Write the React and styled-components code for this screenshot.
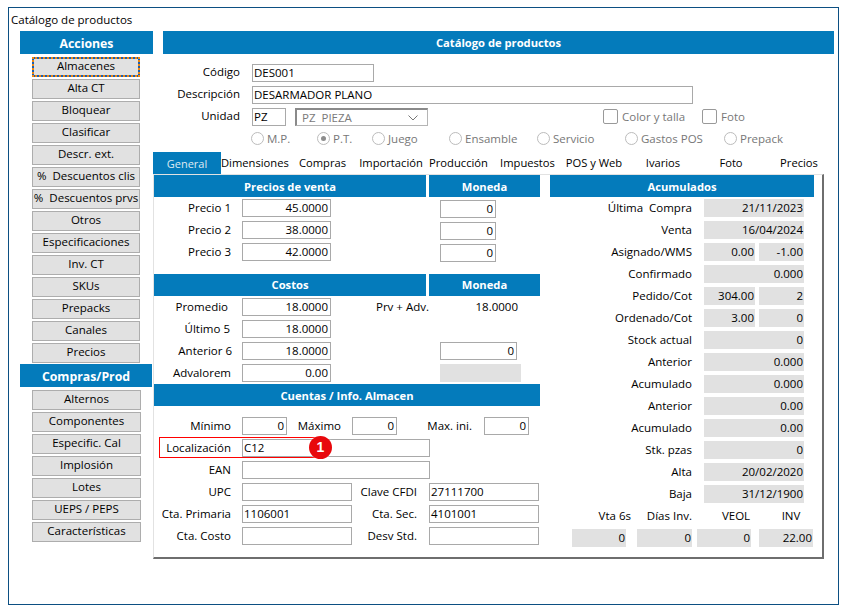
import React from "react";
import styled, { createGlobalStyle } from "styled-components";

const Global = createGlobalStyle`
  html, body { margin: 0; padding: 0; background: #fff; }
  body { font-family: "Open Sans", "Noto Sans", "Liberation Sans", sans-serif; font-size: 11.5px; color: #000; }
`;
const BLUE = "#047bbb";

const Frame = styled.div`
  box-sizing: border-box;
  width: 831px; height: 598px;
  margin: 7px 0 0 8px;
  border: 1px solid #0c4f82;
  padding: 4px 0 0 2px;
`;
const Title = styled.div`height: 19px; line-height: 16px;`;
const Columns = styled.div`display: flex; align-items: flex-start;`;
const Sidebar = styled.div`
  width: 133px; margin-left: 9px; margin-right: 10px; flex: none;
  display: flex; flex-direction: column; align-items: flex-start;
`;
const SideHead = styled.div`
  width: ${p => p.$w}px; height: 23px; line-height: 25px; text-align: center;
  background: ${BLUE}; color: #fff; font-weight: 700; font-size: 12.3px;
`;
const SideGroup = styled.div`
  display: flex; flex-direction: column; gap: 2px; padding: 3px 0 ${p => p.$end}px 12px;
`;
const SideBtn = styled.div`
  box-sizing: border-box; width: ${p => p.$w}px; height: 20px; line-height: 16px;
  text-align: center; background: #e1e1e1; border: 1px solid #adadad;
  white-space: pre; font-size: 11.5px;
  ${p => p.$focus && `
    border: 2px dotted #f0860f;
    background: linear-gradient(#e1e1e1, #e1e1e1) padding-box, #1a5fb0 border-box;
    line-height: 13px;
  `}
`;
const Main = styled.div`width: 671px; flex: none;`;
const MainHead = styled.div`
  height: 23px; line-height: 23px; text-align: center; background: ${BLUE};
  color: #fff; font-weight: 700; font-size: 11.2px;
`;
const Form = styled.div`
  display: grid; grid-template-rows: repeat(3, 22px); padding-top: 8px;
`;
const FormRow = styled.div`display: flex; align-items: center; height: 22px;`;
const FormLabel = styled.div`width: 77px; margin-right: 12px; text-align: right; transform: translateY(-2px);`;
const Input = styled.div`
  box-sizing: border-box; flex: none; width: ${p => p.$w}px; height: 18px; line-height: 16px;
  border: 1px solid #a9a9a9; padding: 0 2px 0 1px; background: #fff; white-space: pre;
  text-align: ${p => p.$right ? "right" : "left"};
  margin-left: ${p => p.$ml || 0}px;
  margin-top: ${p => p.$mt || 0}px;
`;
const Select = styled.div`
  box-sizing: border-box; display: flex; align-items: center; justify-content: space-between;
  width: 133px; height: 18px; margin-left: 9px; padding: 0 9px 0 5px;
  border: 1px solid #b5b5b5; border-top: 2px solid #8a8a8a; border-left: 2px solid #8a8a8a;
  color: #7a7a7a; white-space: pre;
`;
const Check = styled.div`
  display: flex; align-items: center; gap: 4px; color: #777; margin-left: ${p => p.$ml}px;
  transform: translateY(-1px);
`;
const Box = styled.span`
  display: inline-block; box-sizing: border-box; width: 15px; height: 15px; border: 1px solid #999; border-radius: 2px;
`;
const RadioRow = styled.div`display: flex; align-items: center; height: 24px; margin-left: 88px; transform: translateY(-2px);`;
const RadioItem = styled.div`
  display: flex; align-items: center; gap: 3px; width: ${p => p.$w}px; flex: none; color: #777;
`;
const RadioDot = styled.span`
  box-sizing: border-box; width: 13px; height: 13px; border-radius: 50%;
  border: 1px solid #bcbcbc; display: flex; align-items: center; justify-content: center; flex: none;
  &::after { content: ""; width: 5px; height: 5px; border-radius: 50%; background: ${p => p.$on ? "#8d8d8d" : "transparent"}; }
`;
const Tabs = styled.div`display: flex; margin-left: -10px; height: 22px; font-size: 11.2px;`;
const Tab = styled.div`
  width: ${p => p.$w}px; flex: none; text-align: center; line-height: 22px; white-space: pre;
  ${p => p.$on ? `background: ${BLUE}; color: #dfeaf2; line-height: 24px; font-size: 11px;` : ""}
`;
const Panel = styled.div`
  box-sizing: border-box; width: 671px; height: 385px; margin-left: -10px;
  border: 1px solid #e2e2e2; border-right: 2px solid #6e6e6e; border-bottom: 2px solid #6e6e6e;
  display: flex; gap: 10px;
`;
const LeftPane = styled.div`width: 386px; flex: none;`;
const RightPane = styled.div`width: 264px; flex: none;`;
const HeadRow = styled.div`display: flex; gap: 3px;`;
const SecHead = styled.div`
  height: 22px; line-height: ${p => p.$lh || 23}px; text-align: center; background: ${BLUE}; color: #fff;
  font-weight: 700; font-size: 11.2px; width: ${p => p.$w ? p.$w + "px" : "100%"};
`;
const Rows = styled.div`
  display: flex; flex-direction: column; padding-top: ${p => p.$top || 0}px; height: ${p => p.$h}px; box-sizing: border-box;
`;
const Row = styled.div`position: relative; display: flex; align-items: center; height: 22px; flex: none;`;
const Lab = styled.div`
  box-sizing: border-box; width: ${p => p.$w}px; flex: none; text-align: right; transform: translateY(-1px); white-space: pre;
  margin-left: ${p => p.$ml || 0}px; padding-right: ${p => p.$pr || 0}px;
`;
const Plain = styled.div`
  width: ${p => p.$w}px; flex: none; text-align: ${p => p.$center ? "center" : "right"}; margin-left: ${p => p.$ml || 0}px; transform: translateY(-1px); white-space: pre;
`;
const Read = styled.div`
  box-sizing: border-box; flex: none; width: ${p => p.$w}px; height: 18px; line-height: 18px; background: #e1e1e1;
  text-align: right; padding-right: 1px; margin-left: ${p => p.$ml || 0}px;
`;
const RedBox = styled.div`
  position: absolute; left: 5px; top: 0; width: 158px; height: 21px; box-sizing: border-box;
  border: 1px solid #ff0000; pointer-events: none;
`;
const Badge = styled.div`
  position: absolute; left: 155px; top: -1px; width: 23px; height: 23px; border-radius: 50%;
  background: #e8080c; color: #fff; font-weight: 700; font-size: 14px; line-height: 23px; text-align: center;
  box-shadow: 0 0 2px rgba(255,255,255,.9);
  font-family: "Liberation Sans", sans-serif;
`;

const actions = ["Almacenes","Alta CT","Bloquear","Clasificar","Descr. ext.","%  Descuentos clis","%  Descuentos prvs","Otros","Especificaciones","Inv. CT","SKUs","Prepacks","Canales","Precios"];
const compras = ["Alternos","Componentes","Especific. Cal","Implosión","Lotes","UEPS / PEPS","Características"];
const radios = [["M.P.",66],["P.T.",55],["Juego",77],["Ensamble",88],["Servicio",88],["Gastos POS",99],["Prepack",80]];
const tabs = [["General",68],["Dimensiones",66],["Compras",71],["Importación",66],["Producción",69],["Impuestos",69],["POS y Web",64],["Ivarios",74],["Foto",62],["Precios",74]];
const precios = [["Precio 1","45.0000"],["Precio 2","38.0000"],["Precio 3","42.0000"]];
const acum = [
  ["Última  Compra",[["21/11/2023",100]]],
  ["Venta",[["16/04/2024",100]]],
  ["Asignado/WMS",[["0.00",51],["-1.00",45]]],
  ["Confirmado",[["0.000",100]]],
  ["Pedido/Cot",[["304.00",51],["2",45]]],
  ["Ordenado/Cot",[["3.00",51],["0",45]]],
  ["Stock actual",[["0",100]]],
  ["Anterior",[["0.000",100]]],
  ["Acumulado",[["0.000",100]]],
  ["Anterior",[["0.00",100]]],
  ["Acumulado",[["0.00",100]]],
  ["Stk. pzas",[["0",100]]],
  ["Alta",[["20/02/2020",100]]],
  ["Baja",[["31/12/1900",100]]],
];

export default function App() {
  return (
    <>
      <Global />
      <Frame>
        <Title>Catálogo de productos</Title>
        <Columns>
          <Sidebar>
            <SideHead $w={133}>Acciones</SideHead>
            <SideGroup $end={1}>
              {actions.map((a, i) => <SideBtn key={a} $w={108} $focus={i === 0}>{a}</SideBtn>)}
            </SideGroup>
            <SideHead $w={132}>Compras/Prod</SideHead>
            <SideGroup $end={0}>
              {compras.map(a => <SideBtn key={a} $w={109}>{a}</SideBtn>)}
            </SideGroup>
          </Sidebar>
          <Main>
            <MainHead>Catálogo de productos</MainHead>
            <Form>
              <FormRow><FormLabel>Código</FormLabel><Input $w={122}>DES001</Input></FormRow>
              <FormRow><FormLabel>Descripción</FormLabel><Input $w={441}>DESARMADOR PLANO</Input></FormRow>
              <FormRow>
                <FormLabel>Unidad</FormLabel>
                <Input $w={34}>PZ</Input>
                <Select>
                  <span>PZ  PIEZA</span>
                  <svg width="10" height="6" viewBox="0 0 10 6" fill="none" stroke="#777" strokeWidth="1"><path d="M.5.5 5 5 9.5.5" /></svg>
                </Select>
                <Check $ml={175}><Box />Color y talla</Check>
                <Check $ml={17}><Box />Foto</Check>
              </FormRow>
            </Form>
            <RadioRow>
              {radios.map(([r, w]) => <RadioItem key={r} $w={w}><RadioDot $on={r === "P.T."} />{r}</RadioItem>)}
            </RadioRow>
            <Tabs>
              {tabs.map(([t, w], i) => <Tab key={t} $w={w} $on={i === 0}>{t}</Tab>)}
            </Tabs>
            <Panel>
              <LeftPane>
                <HeadRow><SecHead $w={272}>Precios de venta</SecHead><SecHead $w={111}>Moneda</SecHead></HeadRow>
                <Rows $h={77}>
                  {precios.map(([l, v]) => (
                    <Row key={l}>
                      <Lab $w={77}>{l}</Lab>
                      <Input $w={89} $ml={11} $right>{v}</Input>
                      <Input $w={56} $ml={109} $mt={2} $right>0</Input>
                    </Row>
                  ))}
                </Rows>
                <HeadRow><SecHead $w={272} $lh={22}>Costos</SecHead><SecHead $w={111} $lh={22}>Moneda</SecHead></HeadRow>
                <Rows $h={88}>
                  <Row>
                    <Lab $w={77} $pr={3}>Promedio</Lab><Input $w={89} $ml={11} $right>18.0000</Input>
                    <Lab $w={98}>Prv + Adv.</Lab><Plain $w={89}>18.0000</Plain>
                  </Row>
                  <Row><Lab $w={77} $pr={1}>Último 5</Lab><Input $w={89} $ml={11} $right>18.0000</Input></Row>
                  <Row><Lab $w={78}>Anterior 6</Lab><Input $w={89} $ml={10} $right>18.0000</Input><Input $w={77} $ml={109} $right>0</Input></Row>
                  <Row><Lab $w={77}>Advalorem</Lab><Input $w={89} $ml={11} $right>0.00</Input><Read $w={81} $ml={109} /></Row>
                </Rows>
                <SecHead $w={386}>Cuentas / Info. Almacen</SecHead>
                <Rows $top={9}>
                  <Row>
                    <Lab $w={77}>Mínimo</Lab><Input $w={45} $ml={11} $right>0</Input>
                    <Lab $w={54}>Máximo</Lab><Input $w={45} $ml={11} $right>0</Input>
                    <Lab $w={75}>Max. ini.</Lab><Input $w={45} $ml={12} $right>0</Input>
                  </Row>
                  <Row>
                    <Lab $w={77}>Localización</Lab><Input $w={188} $ml={11}>C12</Input>
                    <RedBox /><Badge>1</Badge>
                  </Row>
                  <Row><Lab $w={77}>EAN</Lab><Input $w={188} $ml={11} /></Row>
                  <Row><Lab $w={77}>UPC</Lab><Input $w={110} $ml={11} /><Lab $w={65}>Clave CFDI</Lab><Input $w={110} $ml={12}>27111700</Input></Row>
                  <Row><Lab $w={77}>Cta. Primaria</Lab><Input $w={110} $ml={11}>1106001</Input><Lab $w={65}>Cta. Sec.</Lab><Input $w={110} $ml={12}>4101001</Input></Row>
                  <Row><Lab $w={77}>Cta. Costo</Lab><Input $w={110} $ml={11} /><Lab $w={65}>Desv Std.</Lab><Input $w={110} $ml={12} /></Row>
                </Rows>
              </LeftPane>
              <RightPane>
                <SecHead>Acumulados</SecHead>
                <Rows>
                  {acum.map(([l, vals], i) => (
                    <Row key={i}>
                      <Lab $w={142}>{l}</Lab>
                      {vals.map(([v, w], j) => <Read key={j} $w={w} $ml={j ? 4 : 12}>{v}</Read>)}
                    </Row>
                  ))}
                  <Row>
                    <Plain $w={81}>Vta 6s</Plain><Plain $w={61}>Días Inv.</Plain>
                    <Plain $w={60} $ml={14} $center>VEOL</Plain><Plain $w={46} $ml={2} $center>INV</Plain>
                  </Row>
                  <Row>
                    <Read $w={54} $ml={22}>0</Read><Read $w={55} $ml={11}>0</Read>
                    <Read $w={54} $ml={5}>0</Read><Read $w={54} $ml={8}>22.00</Read>
                  </Row>
                </Rows>
              </RightPane>
            </Panel>
          </Main>
        </Columns>
      </Frame>
    </>
  );
}
